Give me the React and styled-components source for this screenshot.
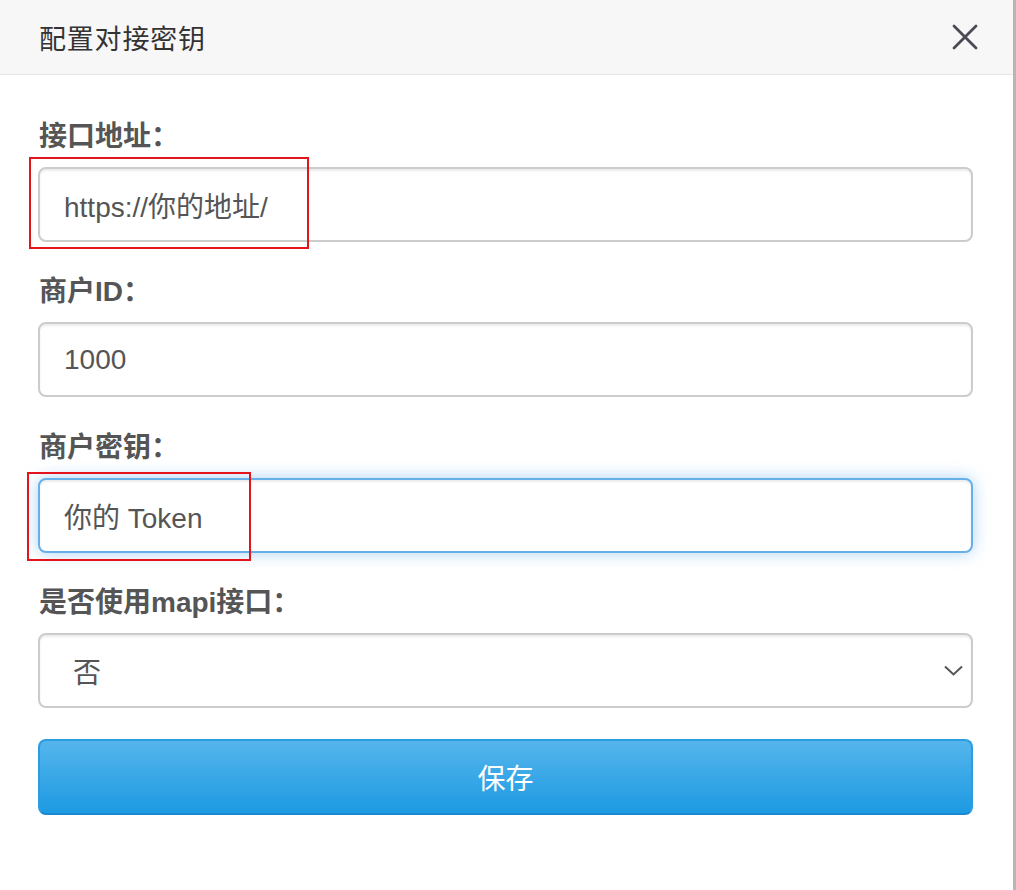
import React from "react";
import styled, { createGlobalStyle } from "styled-components";

const Global = createGlobalStyle`
  html, body { margin: 0; padding: 0; background: #fff; }
  body { font-family: "Liberation Sans", "Noto Sans CJK SC", Arial, sans-serif; }
  * { box-sizing: border-box; }
`;

const Modal = styled.div`
  width: 1016px;
  height: 890px;
  background: #fff;
  border-right: 3px solid #b6b6b6;
  display: flex;
  flex-direction: column;
`;

const Header = styled.div`
  height: 75px;
  flex: none;
  background: #f7f7f7;
  border-bottom: 1px solid #e6e6e6;
  display: flex;
  align-items: center;
  justify-content: space-between;
  padding: 0 34px 0 39px;
`;

const Title = styled.h4`
  margin: 0;
  font-size: 27px;
  font-weight: 400;
  color: #333;
  letter-spacing: 0.8px;
  font-family: "Noto Sans CJK SC", sans-serif;
`;

const Close = styled.button`
  border: 0;
  background: none;
  padding: 0;
  width: 28px;
  height: 28px;
  display: flex;
  align-items: center;
  justify-content: center;
  cursor: pointer;
`;

const Body = styled.form`
  padding: 42px 40px 0 38px;
  display: flex;
  flex-direction: column;
`;

const Group = styled.div`
  display: flex;
  flex-direction: column;
  margin-bottom: ${(p) => p.$mb || 31}px;
  position: relative;
`;

const Label = styled.label`
  display: block;
  height: 40px;
  line-height: 40px;
  margin: 0 0 10px 1px;
  font-size: 28px;
  font-weight: 700;
  color: #555;
  font-family: "Liberation Sans", "Noto Sans CJK SC", sans-serif;
`;

const Input = styled.div`
  height: 75px;
  width: 935px;
  border: 2px solid ${(p) => (p.$focus ? "#66afe9" : "#cccccc")};
  border-radius: 8px;
  background: #fff;
  padding: 0 ${(p) => (p.$select ? "8px" : "24px")} 0 ${(p) => (p.$select ? "33px" : "24px")};
  display: flex;
  align-items: center;
  justify-content: space-between;
  font-size: 28px;
  color: #555;
  box-shadow: ${(p) =>
    p.$focus
      ? "inset 0 2px 2px rgba(0,0,0,.075), 0 0 16px rgba(102,175,233,.55)"
      : "inset 0 2px 2px rgba(0,0,0,.075)"};
  font-family: "Liberation Sans", "Noto Sans CJK SC", sans-serif;
`;

const Highlight = styled.div`
  position: absolute;
  left: ${(p) => p.$left}px;
  top: ${(p) => p.$top}px;
  width: ${(p) => p.$w}px;
  height: ${(p) => p.$h}px;
  border: 2px solid #e3141c;
  pointer-events: none;
`;

const Button = styled.button`
  width: 935px;
  height: 76px;
  border: 2px solid #2a9de0;
  border-bottom-color: #1a89d0;
  border-radius: 8px;
  background: linear-gradient(to bottom, #55b5ec 0%, #1d9ae2 100%);
  color: #fff;
  font-size: 28px;
  font-family: "Noto Sans CJK SC", sans-serif;
  cursor: pointer;
  padding: 0;
`;

const XIcon = () => (
  <svg width="26" height="26" viewBox="0 0 26 26">
    <path d="M2 2 L24 24 M24 2 L2 24" stroke="#4a4a55" strokeWidth="2.8" strokeLinecap="round" />
  </svg>
);

const Chevron = () => (
  <svg width="19" height="11" viewBox="0 0 19 11">
    <path d="M1 1.5 L9.5 9.5 L18 1.5" fill="none" stroke="#555" strokeWidth="2" />
  </svg>
);

export default function App() {
  return (
    <>
      <Global />
      <Modal>
        <Header>
          <Title>配置对接密钥</Title>
          <Close type="button" aria-label="关闭">
            <XIcon />
          </Close>
        </Header>
        <Body onSubmit={(e) => e.preventDefault()}>
          <Group $mb={30}>
            <Label>接口地址：</Label>
            <Input>https://你的地址/</Input>
            <Highlight $left={-9} $top={40} $w={280} $h={92} />
          </Group>
          <Group $mb={31}>
            <Label>商户ID：</Label>
            <Input>1000</Input>
          </Group>
          <Group $mb={30}>
            <Label>商户密钥：</Label>
            <Input $focus>你的 Token</Input>
            <Highlight $left={-11} $top={44} $w={224} $h={89} />
          </Group>
          <Group $mb={31}>
            <Label>是否使用mapi接口：</Label>
            <Input $select>
              <span>否</span>
              <Chevron />
            </Input>
          </Group>
          <Button type="submit">保存</Button>
        </Body>
      </Modal>
    </>
  );
}
